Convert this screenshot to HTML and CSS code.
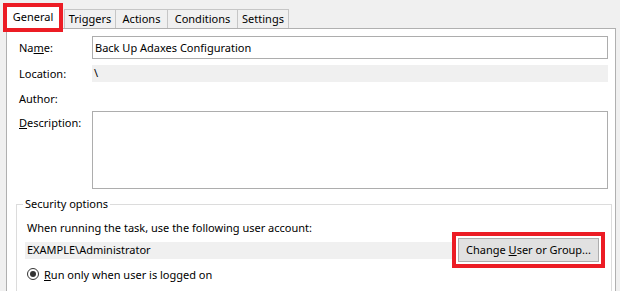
FILE: index.html
```html
<!DOCTYPE html>
<html>
<head>
<meta charset="utf-8">
<link rel="stylesheet" href="styles.css">
</head>
<body>
<div class="tabs">
  <div class="tab tab-active">General</div>
  <div class="tab tab-triggers">Triggers</div>
  <div class="tab tab-actions">Actions</div>
  <div class="tab tab-conditions">Conditions</div>
  <div class="tab tab-settings">Settings</div>
</div>
<div class="panel">
  <div class="row row-name">
    <div class="label">Na<u>m</u>e:</div>
    <div class="input">Back Up Adaxes Configuration</div>
  </div>
  <div class="row row-location">
    <div class="label">Location:</div>
    <div class="readonly">\</div>
  </div>
  <div class="row row-author">
    <div class="label">Author:</div>
    <div class="plain"></div>
  </div>
  <div class="row row-desc">
    <div class="label label-top"><u>D</u>escription:</div>
    <div class="textarea"></div>
  </div>
  <fieldset class="group">
    <legend class="legend">Security options</legend>
    <div class="group-text">When running the task, use the following user account:</div>
    <div class="account-row">
      <div class="account">EXAMPLE\Administrator</div>
      <div class="button">Change <u>U</u>ser or Group...</div>
    </div>
    <div class="radio-row">
      <span class="radio"><span class="radio-dot"></span></span>
      <span class="radio-label"><u>R</u>un only when user is logged on</span>
    </div>
  </fieldset>
</div>
</body>
</html>
```

FILE: styles.css
```css
* { box-sizing: border-box; }
html, body {
  margin: 0;
  padding: 0;
  background: #f0f0f0;
  font-family: "Noto Sans", "Open Sans", sans-serif;
  font-size: 11px;
  color: #000;
  overflow: hidden;
}
u { text-decoration: underline; text-underline-offset: 1px; }

.tabs {
  display: flex;
  align-items: flex-end;
  height: 28px;
  padding-left: 7px;
}
.tab {
  height: 19px;
  line-height: 18px;
  text-align: center;
  background: #f0f0f0;
  border: 1px solid #c6c6c6;
  border-bottom: none;
  border-right: none;
}
.tab-active {
  width: 52px;
  height: 21px;
  line-height: 20px;
  background: #fff;
  border: none;
  outline: 4px solid #ec1c24;
  position: relative;
  z-index: 2;
}
.tab-triggers { width: 51px; margin-left: 5px; }
.tab-actions { width: 52px; }
.tab-conditions { width: 70px; }
.tab-settings { width: 52px; border-right: 1px solid #c6c6c6; }

.panel {
  margin: 0 4px 0 6px;
  height: 263px;
  background: #fff;
  border: 1px solid #b0b0b0;
  border-bottom: none;
  padding: 7px 7px 0 9px;
  overflow: hidden;
}
.row {
  display: flex;
  align-items: center;
}
.label {
  width: 76px;
  padding-left: 3px;
  flex: none;
}
.label-top { align-self: flex-start; padding-top: 4px; }
.row-name { height: 23px; }
.row-location { height: 17px; margin-top: 6px; }
.row-author { height: 17px; margin-top: 8px; }
.row-desc { height: 78px; margin-top: 4px; align-items: stretch; }

.input {
  flex: 1;
  height: 23px;
  line-height: 21px;
  border: 1px solid #adadad;
  padding-left: 2px;
}
.readonly {
  flex: 1;
  height: 17px;
  line-height: 16px;
  background: #f0f0f0;
  padding-left: 2px;
}
.plain { flex: 1; }
.textarea {
  flex: 1;
  border: 1px solid #adadad;
}

.group {
  margin: 8px -4px 0 0;
  padding: 0 12px 0 8px;
  border: 1px solid #dcdcdc;
  height: 100px;
  min-width: 0;
}
.legend {
  margin-left: -2px;
  padding: 0 2px;
  line-height: 14px;
}
.group-text {
  padding-left: 2px;
  line-height: 16px;
  margin-top: 9px;
}
.account-row {
  display: flex;
  align-items: center;
  height: 24px;
  margin-top: 2px;
}
.account {
  flex: 1;
  height: 17px;
  line-height: 16px;
  background: #f0f0f0;
  padding-left: 2px;
  margin-right: 2px;
}
.button {
  width: 141px;
  height: 24px;
  line-height: 22px;
  text-align: center;
  background: #e1e1e1;
  border: 1px solid #adadad;
  outline: 4px solid #ec1c24;
  outline-offset: 2px;
}
.radio-row {
  display: flex;
  align-items: center;
  height: 14px;
  margin-top: 5px;
  padding-left: 2px;
}
.radio {
  width: 12px;
  height: 12px;
  border: 1px solid #333;
  border-radius: 50%;
  display: flex;
  align-items: center;
  justify-content: center;
  margin-right: 5px;
}
.radio-dot {
  width: 6px;
  height: 6px;
  border-radius: 50%;
  background: #333;
}
```
